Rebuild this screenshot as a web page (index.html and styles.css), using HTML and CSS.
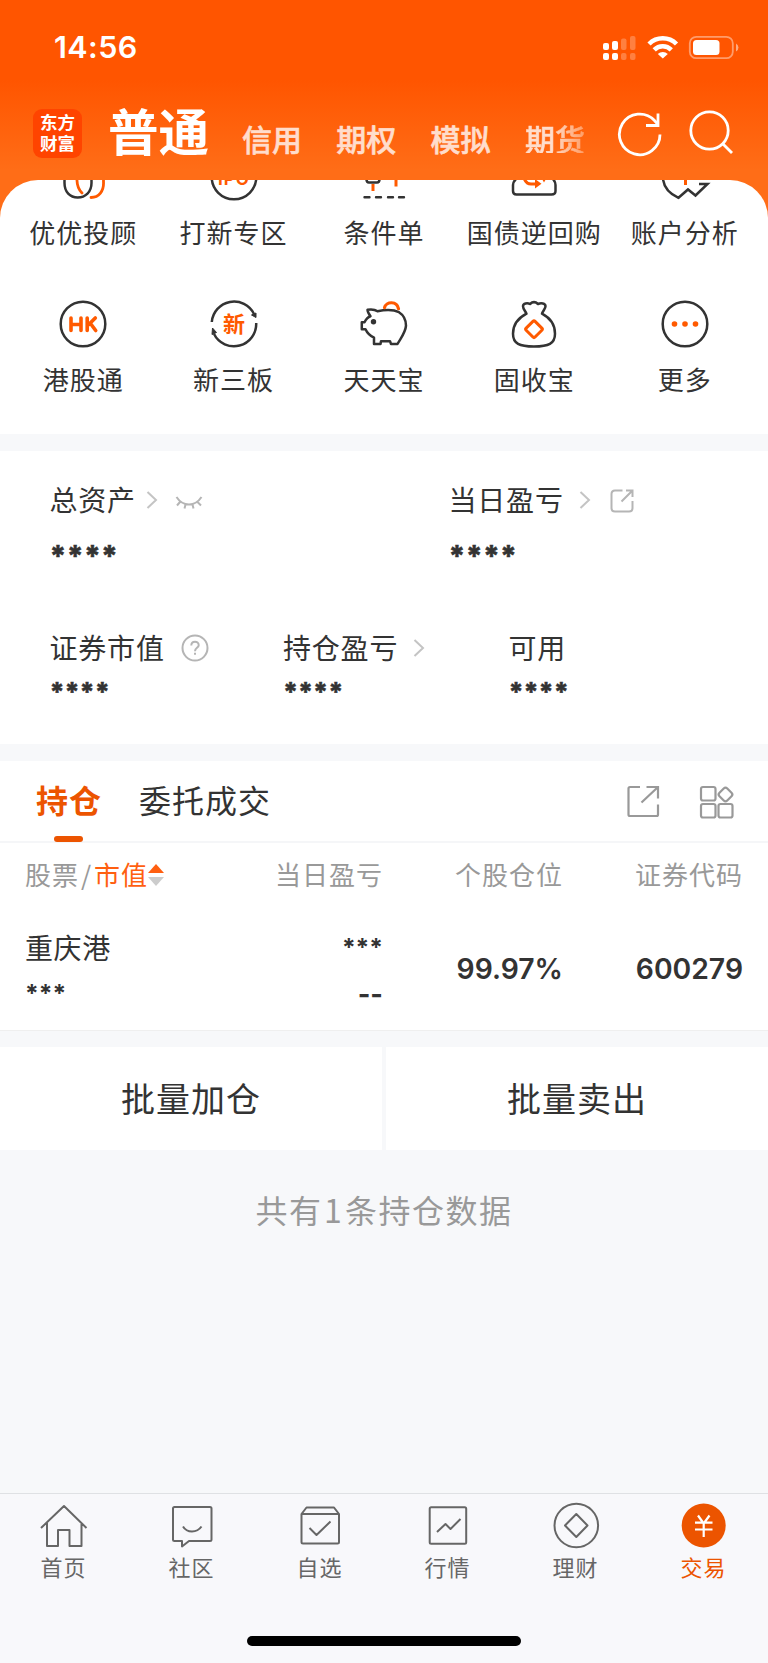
FILE: index.html
```html
<!DOCTYPE html>
<html lang="zh-CN">
<head>
<meta charset="utf-8">
<title>交易</title>
<link rel="stylesheet" href="styles.css">
</head>
<body>
<div class="app">
  <header class="header">
    <div class="status">
      <span class="clock">14:56</span>
      <svg class="status-icons" width="140" height="28" viewBox="601 33 140 28">
        <g fill="#fff">
          <rect x="603" y="43" width="6" height="7" rx="2"/><rect x="612" y="41" width="6" height="9" rx="2"/>
          <rect x="603" y="53" width="6" height="7" rx="2"/><rect x="612" y="53" width="6" height="7" rx="2"/>
        </g>
        <g fill="#fff" opacity=".25">
          <rect x="621" y="38.500" width="5.500" height="11.500" rx="2"/><rect x="630" y="36" width="5.500" height="14" rx="2"/>
          <rect x="621" y="53" width="5.500" height="7" rx="2"/><rect x="630" y="53" width="5.500" height="7" rx="2"/>
        </g>
        <g fill="none" stroke="#fff" stroke-width="4.500">
          <path d="M649 44A19.500 19.500 0 0 1 676.500 44"/>
          <path d="M654.200 49.800A12 12 0 0 1 671.300 49.800"/>
        </g>
        <path d="M657.800 54A7.200 7.200 0 0 1 667.800 54L662.800 58.500Z" fill="#fff"/>
        <rect x="689.800" y="36.800" width="43" height="21.400" rx="6.500" fill="none" stroke="#fff" stroke-opacity=".42" stroke-width="1.800"/>
        <rect x="693" y="40" width="26.500" height="15" rx="3.500" fill="#fff"/>
        <path d="M736 43.500A4.500 4.500 0 0 1 736 51.500Z" fill="#fff" fill-opacity=".5"/>
      </svg>
    </div>
    <div class="topnav">
      <div class="logo"><span>东方</span><span>财富</span></div>
      <nav class="modes">
        <b class="mode-on">普通</b>
        <span class="mode">信用</span><span class="mode">期权</span><span class="mode">模拟</span><span class="mode fade">期货</span>
      </nav>
      <svg class="top-icons" width="120" height="48" viewBox="614 109 120 48" fill="none" stroke="#fff" stroke-width="2.800">
        <path d="M660 134.500A20.300 20.300 0 1 1 654.500 120.500L658 124.500"/><path d="M658 113.500V125.500H646"/>
        <circle cx="709.500" cy="130.500" r="18.700"/><path d="M722.500 143.500L732 153"/>
      </svg>
    </div>
  </header>

  <section class="sheet">
    <div class="tools first">
      <div class="tool">
        <svg width="60" height="23" viewBox="-30 3 60 23" fill="none" stroke-width="2.500" stroke="#333">
          <path d="M-18.500 0V6C-18.500 15-13 20.500-5.300 20.500S8.500 15 8.500 6V0"/>
          <path d="M-6 0C-6.500 8-5 12-1 16M20.500 0V5C21 14 16 20.500 8 20.500" stroke="#ff5a00" stroke-width="2.800" stroke-linecap="round"/>
        </svg><span>优优投顾</span></div>
      <div class="tool">
        <svg width="60" height="23" viewBox="-30 3 60 23">
          <circle r="22.300" fill="none" stroke="#333" stroke-width="2.500"/>
          <text x="0" y="7.500" class="ipo">IPO</text>
        </svg><span>打新专区</span></div>
      <div class="tool">
        <svg width="60" height="23" viewBox="-30 3 60 23" fill="none" stroke="#333" stroke-width="2.600">
          <path d="M-17.500 2Q-17.500 5.500-15 5.500H-7Q-4.500 5.500-4.500 2"/>
          <path d="M-11 7V14M12 2V9.500" stroke="#ff5a00" stroke-width="3"/>
          <path d="M-19.500 20.300H-14.500M-8 20.300H-3M4 20.300H9M15 20.300H20" stroke-linecap="round" stroke-width="2.400"/>
        </svg><span>条件单</span></div>
      <div class="tool">
        <svg width="60" height="23" viewBox="-30 3 60 23" fill="none" stroke="#333" stroke-width="2.500">
          <path d="M-18 2Q-21 5-21 8V14Q-21 17.500-17.500 17.500H17.500Q21.500 17.500 21.500 14V8Q21.500 5 19 2"/>
          <path d="M-10 1Q-8 7-3 7H3" stroke="#ff5a00" stroke-width="3"/>
          <path d="M1 2V11.500L7.500 6.800ZM8 2H12L10 5.500Z" fill="#ff5a00" stroke="none"/>
        </svg><span>国债逆回购</span></div>
      <div class="tool">
        <svg width="60" height="23" viewBox="-30 3 60 23" fill="none" stroke="#333" stroke-width="2.500">
          <path d="M-22 2C-21 11-15 17-6.500 20.800L3 12.500L10.500 18.500L22.500 7H14"/>
          <path d="M.5 2V8" stroke="#ff5a00" stroke-width="3"/>
        </svg><span>账户分析</span></div>
    </div>
    <div class="tools">
      <div class="tool">
        <svg width="60" height="52" viewBox="-30 -26 60 52"><circle r="22.300" fill="none" stroke="#333" stroke-width="2.500"/>
          <g fill="none" stroke="#ff5a00" stroke-width="3.600" stroke-linecap="round" stroke-linejoin="round"><path d="M-12-6V6.500M-2-6V6.500M-12 .5H-2M4.200-6V6.500M12.300-6L5.500 .8M7.500-.5L12.700 6.500"/></g></svg>
        <span>港股通</span></div>
      <div class="tool">
        <svg width="60" height="52" viewBox="-30 -26 60 52"><g fill="none" stroke="#333" stroke-width="2.500">
          <path d="M-22.200-2A22.300 22.300 0 0 1 20-10"/><path d="M22.200-1A22.300 22.300 0 0 1-20 10"/></g>
          <path d="M17.500-9L22-11V-6.500ZM-22 10.500L-21.500 4L-17.500 8.500Z" fill="#333" stroke="#333" stroke-linejoin="round"/>
          <text y="8" class="xin">新</text></svg>
        <span>新三板</span></div>
      <div class="tool">
        <svg width="60" height="52" viewBox="354 298.300 60 52" fill="none" stroke="#333" stroke-width="2.500" stroke-linejoin="round">
          <path d="M370.500 316.500Q367.500 312.500 367.500 310Q374 309 377.500 311.500C385 310 394 310 399 312.500C404.500 316 406 321 406 326C405.500 333 401 338 397.500 344.300H391L390 341.500L381 341.500L380.500 344.300H374V338Q368 335 365.500 329.500H361.800V322.500H364.500Q367 317.500 370.500 316.500Z"/>
          <circle cx="373.500" cy="322" r="2.700" fill="#333" stroke="none"/>
          <path d="M384.500 308C386 301.500 397 301 398.500 309" stroke="#ff5a00" stroke-width="3.200" stroke-linecap="round"/></svg>
        <span>天天宝</span></div>
      <div class="tool">
        <svg width="60" height="52" viewBox="504.500 298.300 60 52" fill="none" stroke="#333" stroke-width="2.500" stroke-linejoin="round">
          <path d="M527 314C525.500 311 523.500 309 523.500 306.500C523.500 303.500 528 303 530.500 304.300Q534.500 300.500 538.500 304.300C541.500 303 546 303.500 546 306.500C546 309 543.500 311 542.500 314C552 319 555.500 326 555.500 334C555.500 344 549 346.800 534.500 346.800S513.500 344 513.500 334C513.500 326 517.500 319 527 314Z"/>
          <rect x="528.200" y="323.200" width="12.600" height="12.600" rx="1.500" transform="rotate(45 534.500 329.500)" stroke="#ff5a00" stroke-width="3"/></svg>
        <span>固收宝</span></div>
      <div class="tool">
        <svg width="60" height="52" viewBox="-30 -26 60 52"><circle r="22.300" fill="none" stroke="#333" stroke-width="2.500"/>
          <g fill="#ff5a00"><circle cx="-10.500" r="2.800"/><circle r="2.800"/><circle cx="10.500" r="2.800"/></g></svg>
        <span>更多</span></div>
    </div>
  </section>

  <section class="assets">
    <div class="row two">
      <div class="cell">
        <div class="label">总资产
          <svg class="chev" width="12" height="20" viewBox="0 0 12 20"><path d="M1.500 2L10 10L1.500 18"/></svg>
          <svg class="eye" width="28" height="16" viewBox="0 0 28 16"><path d="M1.500 2C8 12 20 12 26.500 2M5 7L2 10.500M10.500 9.500L9.500 13.500M17.500 9.500L18.500 13.500M22.500 7L26 10.500"/></svg>
        </div>
        <div class="stars">****</div>
      </div>
      <div class="cell">
        <div class="label">当日盈亏
          <svg class="chev wide" width="12" height="20" viewBox="0 0 12 20"><path d="M1.500 2L10 10L1.500 18"/></svg>
          <svg class="share" width="24" height="24" viewBox="0 0 24 24"><path d="M12.500 1.500H5Q1.500 1.500 1.500 5V19Q1.500 22.500 5 22.500H19Q22.500 22.500 22.500 19V12M16 1.500H22.500V8M22.500 1.500L11.500 12.500"/></svg>
        </div>
        <div class="stars">****</div>
      </div>
    </div>
    <div class="row three">
      <div class="cell">
        <div class="label">证券市值
          <svg class="help" width="28" height="28" viewBox="0 0 28 28"><circle cx="14" cy="14" r="12.500"/><path d="M10.300 11.500C10.300 6.500 17.700 6.500 17.700 11.200C17.700 13.800 14 14 14 17.200M14 18.800V20.800"/></svg>
        </div>
        <div class="stars small">****</div>
      </div>
      <div class="cell">
        <div class="label">持仓盈亏
          <svg class="chev wide" width="12" height="20" viewBox="0 0 12 20"><path d="M1.500 2L10 10L1.500 18"/></svg>
        </div>
        <div class="stars small">****</div>
      </div>
      <div class="cell">
        <div class="label">可用</div>
        <div class="stars small">****</div>
      </div>
    </div>
  </section>

  <section class="tabs">
    <b class="tab on">持仓</b>
    <span class="tab">委托成交</span>
    <svg class="tab-icons" width="110" height="36" viewBox="626 784 110 36" fill="none" stroke="#999" stroke-width="2.200">
      <path d="M640 787H630Q628.500 787 628.500 788.500V814.500Q628.500 816 630 816H656.500Q658 816 658 814.500V804.500M646.500 787H658V798.500M658 787L641.500 802.500"/>
      <rect x="701" y="787" width="14.500" height="13.500" rx="2"/><rect x="701" y="804" width="14.500" height="13.500" rx="2"/><rect x="718.500" y="804" width="14" height="13.500" rx="2"/>
      <rect x="720" y="789" width="11" height="11" rx="2.500" transform="rotate(45 725.500 794.500)"/>
    </svg>
  </section>

  <section class="table">
    <div class="thead">
      <span class="left">股票<i class="slash">/</i><em>市值</em><svg width="16" height="22" viewBox="0 0 16 22"><path d="M0 9L8 0L16 9Z" fill="#ff5f10"/><path d="M0 13L8 22L16 13Z" fill="#ccc"/></svg></span>
      <span>当日盈亏</span><span>个股仓位</span><span>证券代码</span>
    </div>
    <div class="trow">
      <div class="pair left"><span class="name">重庆港</span><span class="mask low">***</span></div>
      <div class="pair"><span class="mask">***</span><span class="mask dash">--</span></div>
      <div class="num">99.97%</div>
      <div class="num">600279</div>
    </div>
  </section>

  <section class="batch"><div>批量加仓</div><div>批量卖出</div></section>
  <p class="count">共有<span>1</span>条持仓数据</p>

  <footer class="footer">
    <nav class="tabbar">
      <div class="item"><svg width="50" height="50" viewBox="39.500 1501 50 50"><path d="M41.500 1528L64.500 1506L87 1528M47.500 1523V1546H58.500V1530H70V1546H82V1523"/></svg><span>首页</span></div>
      <div class="item"><svg width="50" height="50" viewBox="167 1501 50 50"><path d="M174.500 1507H210Q211.500 1507 211.500 1508.500V1539.500Q211.500 1541 210 1541H189L182 1546.500V1541H174.500Q173 1541 173 1539.500V1508.500Q173 1507 174.500 1507ZM183 1526.500Q186 1531.500 192 1531.500T201.500 1526.500"/></svg><span>社区</span></div>
      <div class="item"><svg width="50" height="50" viewBox="295 1501 50 50"><path d="M301.500 1514L306.500 1507.500H334L339 1514V1542Q339 1543.500 337.500 1543.500H303Q301.500 1543.500 301.500 1542ZM301.500 1514H339M309.500 1528L316.500 1535L330.500 1521.500"/></svg><span>自选</span></div>
      <div class="item"><svg width="50" height="50" viewBox="423 1501 50 50"><rect x="429.700" y="1507.300" width="36.500" height="36.500" rx="1.500"/><path d="M437 1532L445.500 1524L450.500 1529L460.500 1519"/></svg><span>行情</span></div>
      <div class="item"><svg width="50" height="50" viewBox="551 1501 50 50"><circle cx="576.300" cy="1525.500" r="21.800"/><path d="M576.300 1514L587.500 1525.500L576.300 1537L565 1525.500Z"/></svg><span>理财</span></div>
      <div class="item on"><svg width="50" height="50" viewBox="679 1501 50 50"><circle cx="703.700" cy="1525.500" r="22" class="coin"/><path d="M698 1515.500L703.700 1523.500L709.500 1515.500M703.700 1523.500V1537M695 1522.700H712.500M695 1529.500H712.500" class="yen"/></svg><span>交易</span></div>
    </nav>
    <div class="home"></div>
  </footer>
</div>
</body>
</html>
```
FILE: styles.css
```css
* { box-sizing: border-box; }
body {
  margin: 0;
  font-family: "Noto Sans CJK SC", sans-serif;
  color: #333;
  background: #f7f8fa;
}
svg { flex: none; }
.app {
  width: 768px;
  height: 1663px;
  display: flex;
  flex-direction: column;
  overflow: hidden;
}

/* header */
.header {
  height: 240px;
  flex: none;
  background: linear-gradient(#ff5500 0, #ff5500 80px, #ff6d17 170px, #ff6d17 240px);
}
.status {
  height: 95px;
  padding: 33px 27px 0 54px;
  display: flex;
  justify-content: space-between;
}
.clock {
  font: 600 30.500px/28px Inter, sans-serif;
  letter-spacing: .4px;
  color: #fff;
}
.topnav {
  height: 85px;
  padding: 14px 34px 0 33px;
  display: flex;
  align-items: flex-start;
}
.logo {
  width: 49px;
  height: 49px;
  border-radius: 9px;
  background: #ff4400;
  color: #fff;
  font-weight: 700;
  font-size: 17.500px;
  line-height: 21px;
  padding-top: 2px;
  display: flex;
  flex-direction: column;
  align-items: center;
}
.modes {
  margin-left: 26px;
  width: 506px;
  height: 52px;
  display: flex;
  align-items: flex-start;
}
.mode-on {
  width: 134px;
  font-size: 50.500px;
  line-height: 50px;
  margin-top: -5px;
  color: #fff;
}
.mode {
  width: 94.300px;
  font-size: 30px;
  line-height: 30px;
  font-weight: 500;
  margin-top: 14px;
  color: #ffddcc;
  -webkit-text-stroke: .6px #ffddcc;
}
.fade {
  width: 60px;
  color: transparent;
  -webkit-text-stroke: .6px transparent;
  background: linear-gradient(90deg, #ffddcc 45%, #ff9c64);
  background-clip: text;
  -webkit-background-clip: text;
}
.top-icons { margin-left: auto; }

/* shortcut grid */
.sheet {
  margin-top: -60px;
  height: 254px;
  flex: none;
  background: #fff;
  border-radius: 38px 38px 0 0;
  padding: 0 8px;
  overflow: hidden;
}
.tools { display: grid; grid-template-columns: repeat(5, 150.400px); }
.tool {
  display: flex;
  flex-direction: column;
  align-items: center;
}
.tool span {
  font-size: 26px;
  line-height: 30px;
  letter-spacing: 1px;
  white-space: nowrap;
  margin-top: 14px;
}
.first { height: 118px; }
.tools:not(.first) .tool span { margin-top: 14px; }
.ipo { font: 700 17px Inter, sans-serif; fill: #ff5a00; text-anchor: middle; letter-spacing: 1px; }
.xin { font: 700 22px "Noto Sans CJK SC", sans-serif; fill: #ff5a00; text-anchor: middle; }

/* assets */
.assets {
  margin-top: 17px;
  height: 293px;
  flex: none;
  background: #fff;
  padding: 32px 0 0 49.500px;
}
.row { display: grid; }
.two { grid-template-columns: 399px 1fr; height: 148px; }
.three { grid-template-columns: 233.500px 225.500px 1fr; }
.label {
  display: flex;
  align-items: center;
  height: 32px;
  font-size: 28px;
  line-height: 32px;
  letter-spacing: .8px;
}
.label svg { fill: none; stroke: #b5b5b5; stroke-width: 2; margin-top: 2px; }
.label .chev { margin-left: 10px; stroke: #c4c4c4; }
.label .wide { margin-left: 15px; }
.label .eye { margin-left: 17px; margin-top: 8px; }
.label .share { margin-left: 19px; margin-top: 4px; }
.label .help { margin-left: 16px; }
.stars {
  font: 800 29px/32px Inter, sans-serif;
  letter-spacing: .3px;
  margin-top: 25px;
  -webkit-text-stroke: .5px #333;
}
.small { font-size: 26px; letter-spacing: -.1px; margin-top: 13px; }

/* tabs */
.tabs {
  margin-top: 17px;
  height: 80px;
  flex: none;
  background: #fff;
  padding: 0 32px 0 36px;
  display: flex;
}
.tab {
  position: relative;
  font-size: 32px;
  line-height: 77px;
  letter-spacing: 1px;
  margin-right: 37px;
}
.tab.on { color: #ec5400; }
.tab.on::after {
  content: "";
  position: absolute;
  left: 18px;
  top: 75px;
  width: 29px;
  height: 6px;
  border-radius: 3px;
  background: #ec5400;
}
.tab-icons { margin: 23px 0 0 auto; }

/* holdings */
.table {
  height: 190px;
  flex: none;
  background: #fff;
  border-top: 2px solid #f5f6f8;
  border-bottom: 1px solid #efefef;
  padding: 0 25px;
}
.thead, .trow {
  display: grid;
  grid-template-columns: 178px 180px 180px 180px;
  text-align: right;
}
.thead {
  padding-top: 14px;
  font-size: 26px;
  line-height: 34px;
  letter-spacing: 1px;
  color: #999;
}
.thead .left { display: flex; align-items: center; }
.slash { font-style: normal; width: 15px; text-align: center; }
.thead em { font-style: normal; color: #ff5f10; }
.thead svg { margin-top: 2px; }
.trow { padding-top: 36px; }
.pair { display: flex; flex-direction: column; }
.pair.left { text-align: left; }
.name { font-size: 28px; line-height: 40px; letter-spacing: .6px; }
.mask { font: 700 24.500px/40px Inter, sans-serif; }
.low { margin-top: 6px; }
.dash { margin-top: 8px; font-size: 27px; }
.num { font: 600 28.300px/40px Inter, sans-serif; padding-top: 22px; }

/* actions */
.batch {
  margin-top: 16px;
  height: 103px;
  flex: none;
  display: grid;
  grid-template-columns: 1fr 1fr;
  column-gap: 4px;
}
.batch div {
  background: #fff;
  text-align: center;
  font-size: 34px;
  line-height: 101px;
  letter-spacing: 1px;
}
.count {
  margin: 38px 0 0;
  text-align: center;
  font-size: 32px;
  line-height: 42px;
  letter-spacing: 1.500px;
  color: #999;
}
.count span { margin: 0 1.500px; }

/* bottom bar */
.footer {
  margin-top: auto;
  height: 170px;
  flex: none;
  border-top: 1px solid #dfe1e4;
  background: #f8f8fb;
}
.tabbar { display: grid; grid-template-columns: repeat(6, 128px); }
.item {
  display: flex;
  flex-direction: column;
  align-items: center;
  padding-top: 7px;
  color: #666;
}
.item svg { fill: none; stroke: #666; stroke-width: 2; stroke-linejoin: round; }
.item span { font-size: 22px; line-height: 30px; letter-spacing: 1px; margin-left: -1px; }
.item.on { color: #ec5400; }
.item svg .coin { fill: #ec5400; stroke: none; }
.item svg .yen { stroke: #fff; stroke-width: 2.200; }
.home {
  width: 274px;
  height: 10px;
  border-radius: 5px;
  background: #000;
  margin: 55px auto 0;
}
```
